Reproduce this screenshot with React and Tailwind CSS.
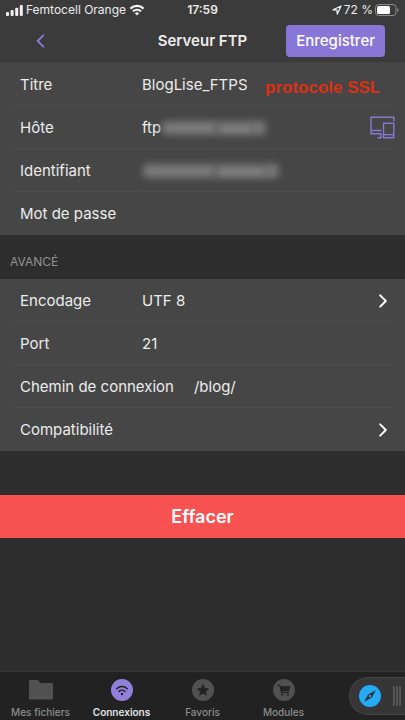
import { useState } from "react"

// =========================
// ICONS
// =========================

function WifiIcon() {
  return (
    <svg viewBox="0 0 16 12" className="w-4 h-3" fill="none" stroke="#f2f2f2" strokeWidth="2.2">
      <path d="M1.4 4.6a9.4 9.4 0 0 1 13.2 0" />
      <path d="M4 7.4a5.7 5.7 0 0 1 8 0" />
      <path d="M8 11.6 5.8 9.3a3.2 3.2 0 0 1 4.4 0z" fill="#f2f2f2" stroke="none" />
    </svg>
  )
}

function SignalIcon() {
  return (
    <svg viewBox="0 0 17 11" className="w-[17px] h-[11px]" fill="#f2f2f2">
      <rect x="0" y="7" width="3" height="4" rx="1" />
      <rect x="4.6" y="5" width="3" height="6" rx="1" />
      <rect x="9.2" y="2.7" width="3" height="8.3" rx="1" />
      <rect x="13.8" y="0" width="3" height="11" rx="1" />
    </svg>
  )
}

function BatteryIcon() {
  return (
    <svg viewBox="0 0 24 12" className="w-6 h-3" fill="none">
      <rect x="0.5" y="0.5" width="20.5" height="11" rx="3" stroke="#8c8c8c" />
      <rect x="2" y="2" width="13" height="8" rx="1.5" fill="#ffffff" />
      <path d="M22.3 4v4c.9-.3 1.3-1.1 1.3-2s-.4-1.7-1.3-2z" fill="#8c8c8c" />
    </svg>
  )
}

function DevicesIcon() {
  return (
    <svg viewBox="0 0 25 23" className="w-[25px] h-[23px]" fill="none" stroke="#8878d4" strokeWidth="1.4">
      <path d="M23.8 5.5V1.3H1v16.5h10.5M1 14.5h10.5M11 18v3.7M7.5 21.7h4" />
      <rect x="13.5" y="7.3" width="10.3" height="14.4" />
      <path d="M13.5 18.6h10.3" />
    </svg>
  )
}

function Chevron({ className }) {
  return (
    <svg viewBox="0 0 8 14" className={className} fill="none" stroke="currentColor" strokeWidth="2" strokeLinecap="round" strokeLinejoin="round">
      <path d="m1.2 1.4 5.6 5.6-5.6 5.6" />
    </svg>
  )
}

function FolderIcon() {
  return (
    <svg viewBox="0 0 24 22" className="w-6 h-[22px]" fill="#515151">
      <path d="M0 2.2C0 1.4.6 1 1.3 1h7.4l3 3h11c.8 0 1.3.5 1.3 1.3v13.9c0 .8-.5 1.3-1.3 1.3H1.3C.5 20.5 0 20 0 19.2z" />
    </svg>
  )
}

function ConnectionIcon() {
  return (
    <svg viewBox="0 0 22 22" className="w-[22px] h-[22px]" fill="none" stroke="#222222" strokeWidth="1.5" strokeLinecap="round">
      <circle cx="11" cy="11" r="11" fill="#9080dc" stroke="none" />
      <path d="M5.7 9.7a7.6 7.6 0 0 1 10.6 0M8.1 12.4a4.2 4.2 0 0 1 5.8 0" />
      <circle cx="11" cy="15" r="1.2" fill="#222222" stroke="none" />
    </svg>
  )
}

function StarIcon() {
  return (
    <svg viewBox="0 0 22 22" className="w-[22px] h-[22px]">
      <circle cx="11" cy="11" r="11" fill="#515151" />
      <path d="m11 4.8 1.9 4.1 4.4.5-3.3 3 .9 4.4-3.9-2.2-3.9 2.2.9-4.4-3.3-3 4.4-.5z" fill="#222222" />
    </svg>
  )
}

function CartIcon() {
  return (
    <svg viewBox="0 0 22 22" className="w-[22px] h-[22px]">
      <circle cx="11" cy="11" r="11" fill="#515151" />
      <path d="M4.5 6h2.3l1.8 7.5h7" fill="none" stroke="#222222" strokeWidth="1.2" strokeLinecap="round" />
      <path d="M7 7.2h10.5l-1.6 5H8.3z" fill="#222222" />
      <circle cx="9.2" cy="15.7" r="1.1" fill="#222222" />
      <circle cx="14.9" cy="15.7" r="1.1" fill="#222222" />
    </svg>
  )
}

function CompassIcon() {
  return (
    <svg viewBox="0 0 22 22" className="w-[22px] h-[22px]">
      <circle cx="11" cy="11" r="11" fill="#25aaf5" />
      <path d="M16.8 5.2 12.9 12.6 5.2 16.8 9.1 9.4z" fill="#2d3439" />
      <circle cx="11" cy="11" r="1.2" fill="#25aaf5" />
    </svg>
  )
}

// =========================
// ROWS
// =========================

function Row({ children, last }) {
  return (
    <div className="relative flex items-center h-[43px] pl-5 pr-3">
      {children}
      {!last && <div className="absolute bottom-0 left-3 right-3 h-px bg-[#4c4c4c]" />}
    </div>
  )
}

function Label({ id, children }) {
  return (
    <label htmlFor={id} className="min-w-[122px] shrink-0 whitespace-nowrap">
      {children}
    </label>
  )
}

// hidden part of a value
function Smudge({ className }) {
  return (
    <div className={className}>
      <div className="flex-1 h-4 rounded-md bg-[#686868]" />
      <div className="absolute left-1 right-[50%] top-1 h-2 bg-[#7c7c7c]" />
      <div className="absolute left-[56%] right-4 top-[5px] h-2 bg-[#808080]" />
      <div className="absolute right-1 top-[2px] w-2 h-3 bg-[#787878]" />
    </div>
  )
}

const tabs = [
  { name: "Mes fichiers", Icon: FolderIcon },
  { name: "Connexions", Icon: ConnectionIcon },
  { name: "Favoris", Icon: StarIcon },
  { name: "Modules", Icon: CartIcon },
]

function App() {

  const [title, setTitle] = useState("BlogLise_FTPS")
  const [host, setHost] = useState("ftp")
  const [user, setUser] = useState("")
  const [password, setPassword] = useState("")
  const [port, setPort] = useState("21")
  const [path, setPath] = useState("/blog/")

  return (

    <div className="min-h-screen flex flex-col bg-[#2d2d2d] text-[#ececec] font-['Inter',sans-serif] text-[15px] leading-5">

      {/* STATUS BAR + HEADER */}
      <header className="bg-[#3b3b3b] border-b border-[#434343]">

        <div className="grid grid-cols-[1fr_auto_1fr] items-center h-5 px-[6px] text-xs">
          <div className="flex items-center gap-[3px] whitespace-nowrap">
            <SignalIcon />
            <span>Femtocell Orange</span>
            <WifiIcon />
          </div>
          <span className="font-semibold">17:59</span>
          <div className="flex items-center justify-end gap-[2px] whitespace-nowrap">
            <svg viewBox="0 0 10 10" className="w-[10px] h-[10px]" fill="none" stroke="#ececec" strokeWidth="1.3" strokeLinejoin="round">
              <path d="M9 1 1 4.8l3.9.4.4 3.9z" />
            </svg>
            <span>72 %</span>
            <BatteryIcon />
          </div>
        </div>

        <div className="grid grid-cols-[1fr_auto_1fr] items-center h-[42px] px-5">
          <button aria-label="Retour" className="justify-self-start px-4 text-[#8878d4]">
            <Chevron className="w-[9px] h-[14px] rotate-180" />
          </button>
          <h1 className="font-semibold">Serveur FTP</h1>
          <button className="justify-self-end h-8 px-[10px] rounded bg-[#8876d6] font-medium text-white">
            Enregistrer
          </button>
        </div>

      </header>

      {/* CONNECTION */}
      <section className="bg-[#464646]">

        <Row>
          <Label id="title">Titre</Label>
          <input id="title" value={title} onChange={(e) => setTitle(e.target.value)} className="flex-1 min-w-0 outline-none" />
          <span className="absolute left-[265px] top-[15px] font-['Liberation_Sans',sans-serif] text-[17px] leading-5 font-bold text-[#dc3013] whitespace-nowrap">
            protocole SSL
          </span>
        </Row>

        <Row>
          <Label id="host">Hôte</Label>
          <input id="host" value={host} onChange={(e) => setHost(e.target.value)} className="field-sizing-content outline-none" />
          <Smudge className="relative flex w-[106px] blur-[3px]" />
          <button aria-label="Appareils" className="ml-auto -mr-[2px]">
            <DevicesIcon />
          </button>
        </Row>

        <Row>
          <Label id="user">Identifiant</Label>
          <Smudge className="relative flex w-[138px] blur-[3px]" />
          <input id="user" value={user} onChange={(e) => setUser(e.target.value)} className="flex-1 min-w-0 outline-none" />
        </Row>

        <Row last>
          <Label id="password">Mot de passe</Label>
          <input id="password" type="password" value={password} onChange={(e) => setPassword(e.target.value)} className="flex-1 min-w-0 outline-none" />
        </Row>

      </section>

      {/* ADVANCED */}
      <h2 className="h-11 px-[10px] pt-[17px] text-xs leading-5 text-[#929292]">AVANCÉ</h2>

      <section className="bg-[#464646]">

        <Row>
          <button className="flex flex-1 items-center text-left">
            <span className="w-[122px]">Encodage</span>
            <span className="flex-1">UTF 8</span>
            <Chevron className="w-2 h-[14px] mr-[6px] text-white" />
          </button>
        </Row>

        <Row>
          <Label id="port">Port</Label>
          <input id="port" value={port} onChange={(e) => setPort(e.target.value)} className="flex-1 min-w-0 outline-none" />
        </Row>

        <Row>
          <Label id="path">Chemin de connexion</Label>
          <input id="path" value={path} onChange={(e) => setPath(e.target.value)} className="flex-1 min-w-0 ml-5 outline-none" />
        </Row>

        <Row last>
          <button className="flex flex-1 items-center text-left">
            <span className="flex-1">Compatibilité</span>
            <Chevron className="w-2 h-[14px] mr-[6px] text-white" />
          </button>
        </Row>

      </section>

      <button className="mt-11 h-[43px] bg-[#f95252] text-lg font-semibold text-white">
        Effacer
      </button>

      {/* TAB BAR */}
      <nav className="relative mt-auto grid grid-cols-5 h-[49px] bg-[#222222] border-t border-[#353535]">

        {tabs.map(({ name, Icon }) => (
          <button
            key={name}
            className={
              name === "Connexions"
                ? "flex flex-col items-center pt-[7px] gap-[3px] text-[10px] leading-4 font-semibold text-[#e4e4e4]"
                : "flex flex-col items-center pt-[7px] gap-[3px] text-[10px] leading-4 font-medium text-[#8c8c8c]"
            }
          >
            <Icon />
            <span className="whitespace-nowrap">{name}</span>
          </button>
        ))}

        <button
          aria-label="Navigateur"
          className="absolute right-0 top-[5px] flex items-center gap-3 h-[38px] w-14 pl-[9px] rounded-l-full bg-[#363636] border border-r-0 border-[#444444]"
        >
          <CompassIcon />
          <svg viewBox="0 0 8 20" className="w-2 h-5" stroke="#606060" strokeWidth="1.5">
            <path d="M1 0v20M4 0v20M7 0v20" />
          </svg>
        </button>

      </nav>

    </div>

  )
}

export default App
